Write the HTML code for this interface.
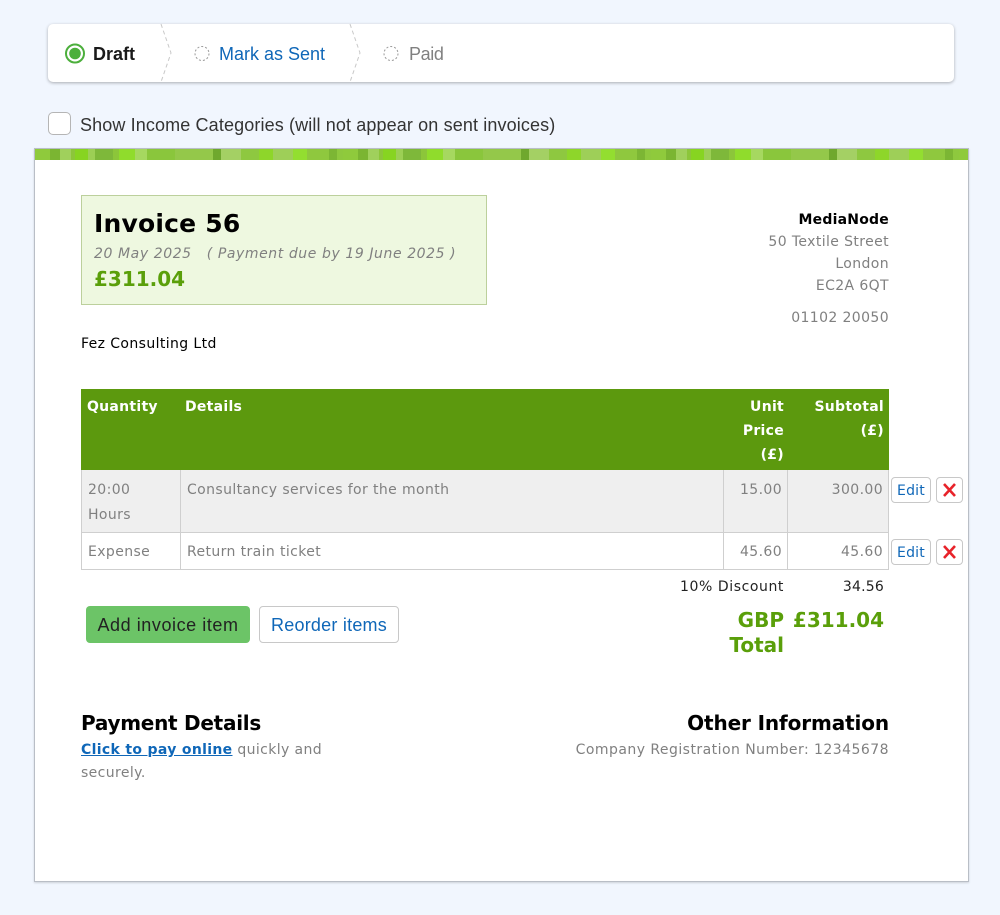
<!DOCTYPE html>
<html><head><meta charset="utf-8"><style>
html,body{margin:0;padding:0;width:1000px;height:915px;overflow:hidden;background:#f1f6fe}
body{position:relative;font-family:"DejaVu Sans","Liberation Sans",sans-serif;font-size:14px;color:#808080;letter-spacing:.39px}
.t{position:absolute;white-space:nowrap;line-height:20px}
.r{text-align:right}
.u{font-family:"Liberation Sans",sans-serif;letter-spacing:0}
.b{position:absolute;box-sizing:border-box}
.h{font-weight:bold;color:#fff;letter-spacing:.28px}
.g{font-size:20px;font-weight:bold;color:#5a9f0a;letter-spacing:0}
.e{background:#fff;border:1px solid #c8c8c8;border-radius:4px;color:#0f67b8;text-align:center;line-height:27px;font-size:14px;letter-spacing:.2px}
</style></head><body>
<div class="b" style="left:48px;top:24px;width:906px;height:58px;background:#fff;border-radius:5px;box-shadow:0 1px 3px rgba(0,0,0,.3)"></div>
<svg class="b" style="left:0;top:0" width="1000" height="100">
<path d="M161 24L171 53L161 82M350 24L360 53L350 82" fill="none" stroke="#c8c8c8" stroke-dasharray="4 3"/>
<circle cx="75" cy="53.500" r="9" fill="none" stroke="#4caf3c" stroke-width="2"/><circle cx="75" cy="53.500" r="5.800" fill="#4caf3c"/>
<circle cx="202" cy="53.500" r="7" fill="none" stroke="#999" stroke-dasharray="2 2"/>
<circle cx="391" cy="53.500" r="7" fill="none" stroke="#999" stroke-dasharray="2 2"/>
</svg>
<div class="t u" style="left:93px;top:44px;font-size:18px;font-weight:bold;color:#1a1a1a">Draft</div>
<div class="t u" style="left:219px;top:44px;font-size:18px;color:#0f67b8">Mark as Sent</div>
<div class="t u" style="left:409px;top:44px;font-size:18px;color:#808080;letter-spacing:-.4px">Paid</div>
<div class="b" style="left:48px;top:112px;width:23px;height:23px;background:#fff;border:1px solid #b5b5b5;border-radius:5px"></div>
<div class="t u" style="left:80px;top:115px;font-size:18px;color:#333;letter-spacing:.125px">Show Income Categories (will not appear on sent invoices)</div>

<div class="b" style="left:34px;top:148px;width:935px;height:734px;background:#fff;border:1px solid #b9bec6;box-shadow:0 1px 2px rgba(0,0,0,.15)"></div>
<div class="b" style="left:35px;top:149px;width:933px;height:11px;background-color:#8cc63a;background-image:repeating-linear-gradient(90deg,#8fca3c 0 15px,#7bb532 15px 25px,#a0d05c 25px 36px,#8cc63a 36px 40px,#87d421 40px 53px,#9ccf55 53px 60px,#7eb83a 60px 78px,#8cc63a 78px 84px,#90dc2c 84px 100px,#a6d860 100px 112px,#8ac63c 112px 140px,#94c84a 140px 178px,#6fa82e 178px 186px,#a4d064 186px 206px,#8ec840 206px 224px,#8ed62a 224px 238px,#9ecf58 238px 258px,#93de30 258px 272px,#8fc83e 272px 294px,#7cb634 294px 302px,#8ec83e 302px 308px)"></div>

<div class="b" style="left:81px;top:195px;width:406px;height:110px;background:#eef8e0;border:1px solid #bcd09c"></div>
<div class="t" style="left:94px;top:214px;font-size:25px;font-weight:bold;color:#000;line-height:20px;letter-spacing:.2px">Invoice 56</div>
<div class="t" style="left:94px;top:244px;font-style:italic;color:#808080;letter-spacing:.58px">20 May 2025 &nbsp; ( Payment due by 19 June 2025 )</div>
<div class="t g" style="left:94px;top:269px">£311.04</div>

<div class="t r" style="right:111px;top:210px;font-weight:bold;color:#000;letter-spacing:.22px">MediaNode</div>
<div class="t r" style="right:111px;top:232px">50 Textile Street</div>
<div class="t r" style="right:111px;top:254px">London</div>
<div class="t r" style="right:111px;top:276px">EC2A 6QT</div>
<div class="t r" style="right:111px;top:308px">01102 20050</div>
<div class="t" style="left:81px;top:334px;color:#000">Fez Consulting Ltd</div>

<div class="b" style="left:81px;top:389px;width:808px;height:81px;background:#5c990e"></div>
<div class="b" style="left:81px;top:470px;width:808px;height:100px;border:1px solid #cfcfcf;border-top:0"></div>
<div class="b" style="left:82px;top:470px;width:806px;height:62px;background:#efefef"></div>
<div class="b" style="left:82px;top:532px;width:806px;height:1px;background:#cfcfcf"></div>
<div class="b" style="left:180px;top:470px;width:1px;height:100px;background:#cfcfcf"></div>
<div class="b" style="left:723px;top:470px;width:1px;height:100px;background:#cfcfcf"></div>
<div class="b" style="left:787px;top:470px;width:1px;height:100px;background:#cfcfcf"></div>

<div class="t h" style="left:87px;top:397px">Quantity</div>
<div class="t h" style="left:185px;top:397px">Details</div>
<div class="t r h" style="right:216px;top:397px">Unit</div>
<div class="t r h" style="right:216px;top:421px">Price</div>
<div class="t r h" style="right:216px;top:445px">(£)</div>
<div class="t r h" style="right:116px;top:397px">Subtotal</div>
<div class="t r h" style="right:116px;top:421px">(£)</div>

<div class="t" style="left:88px;top:480px">20:00</div>
<div class="t" style="left:88px;top:505px">Hours</div>
<div class="t" style="left:187px;top:480px">Consultancy services for the month</div>
<div class="t r" style="right:218px;top:480px">15.00</div>
<div class="t r" style="right:117px;top:480px">300.00</div>
<div class="t" style="left:88px;top:542px">Expense</div>
<div class="t" style="left:187px;top:542px">Return train ticket</div>
<div class="t r" style="right:218px;top:542px">45.60</div>
<div class="t r" style="right:117px;top:542px">45.60</div>

<div class="b e" style="left:891px;top:477px;width:40px;height:26px">Edit</div>
<div class="b e" style="left:936px;top:477px;width:27px;height:26px"></div>
<div class="b e" style="left:891px;top:539px;width:40px;height:26px">Edit</div>
<div class="b e" style="left:936px;top:539px;width:27px;height:26px"></div>
<svg class="b" style="left:0;top:470px" width="1000" height="100"><path d="M944 14L955 26M955 14L944 26M944 76L955 88M955 76L944 88" stroke="#e8232a" stroke-width="2.600" fill="none"/></svg>

<div class="t r" style="right:216px;top:577px;color:#222;letter-spacing:.58px">10% Discount</div>
<div class="t r" style="right:116px;top:577px;color:#222;letter-spacing:.2px">34.56</div>
<div class="t r g" style="right:216px;top:610px">GBP</div>
<div class="t r g" style="right:216px;top:635px">Total</div>
<div class="t r g" style="right:116px;top:610px">£311.04</div>

<div class="b u" style="left:86px;top:606px;width:164px;height:37px;background:#6cc467;border-radius:4px;color:#222;text-align:center;line-height:38px;font-size:18px;letter-spacing:.56px">Add invoice item</div>
<div class="b u" style="left:259px;top:606px;width:140px;height:37px;background:#fff;border:1px solid #c8c8c8;border-radius:4px;color:#0f67b8;text-align:center;line-height:36px;font-size:18px;letter-spacing:.23px">Reorder items</div>

<div class="t" style="left:81px;top:713px;font-size:20px;font-weight:bold;color:#000;letter-spacing:-.27px">Payment Details</div>
<div class="t" style="left:81px;top:740px"><span style="font-weight:bold;color:#0f67b8;text-decoration:underline;letter-spacing:.33px">Click to pay online</span> quickly and</div>
<div class="t" style="left:81px;top:763px">securely.</div>
<div class="t r" style="right:111px;top:713px;font-size:20px;font-weight:bold;color:#000;letter-spacing:-.12px">Other Information</div>
<div class="t r" style="right:111px;top:740px;letter-spacing:.46px">Company Registration Number: 12345678</div>
</body></html>
